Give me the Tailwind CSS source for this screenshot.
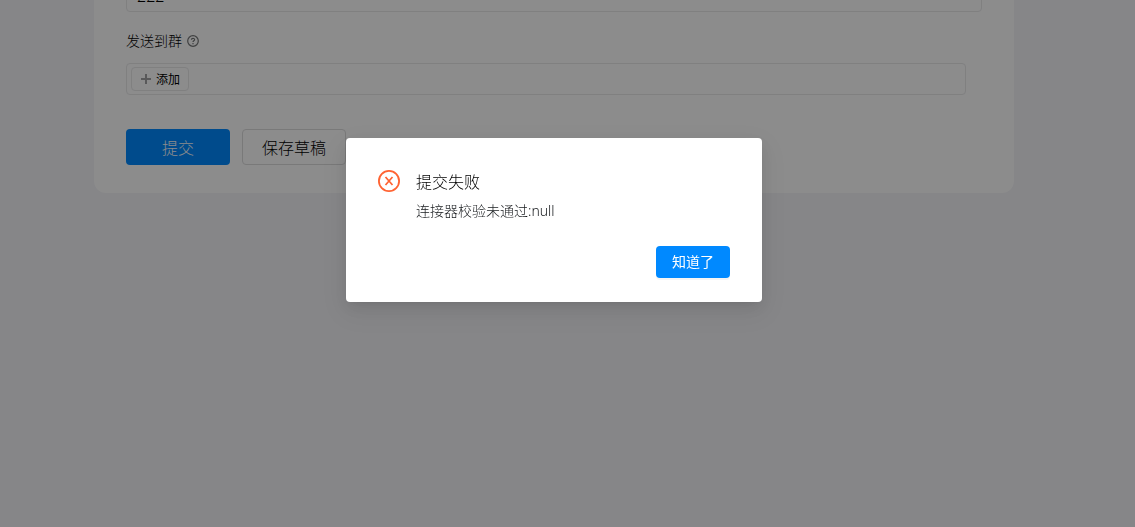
<!DOCTYPE html>
<html lang="zh-CN">
<head>
<meta charset="utf-8">
<meta name="viewport" content="width=device-width, initial-scale=1">
<title>提交失败</title>
<script src="https://cdn.jsdelivr.net/npm/@tailwindcss/browser@4"></script>
</head>
<body class="min-h-screen overflow-hidden bg-[#f4f4f8] font-['Noto_Sans','Noto_Sans_CJK_SC',sans-serif] text-sm font-light text-black">
<main class="pr-[27px]">
  <form class="mx-auto -mt-5 max-w-[920px] rounded-b-xl bg-white px-8 pb-7">
    <input aria-label="内容" value="222" class="block h-8 w-full rounded border border-[#e9e9ea] px-[10px] text-base font-light">
    <div class="mt-[18px] flex h-[22px] items-center gap-[5px]">
      <span>发送到群</span>
      <svg class="size-3" viewBox="0 0 12 12" fill="none" stroke="#747677" stroke-width="1.2" role="img" aria-label="帮助"><circle cx="6" cy="6" r="5.3"/><path d="M4.4 4.8c0-2 3.2-2 3.2-.1 0 1.2-1.6 1.1-1.6 2.4M6 8v1.2"/></svg>
    </div>
    <div class="mt-[11px] mr-4 flex h-8 items-center rounded border border-[#e9e9ea] px-1">
      <button type="button" class="flex h-6 items-center gap-1 rounded border border-[#e9e9ea] px-2 text-xs font-normal">
        <svg class="size-3" viewBox="0 0 12 12" fill="none" stroke="#a2a3a5" stroke-width="2"><path d="M6 1v10M1 6h10"/></svg>
        <span class="pt-0.5">添加</span>
      </button>
    </div>
    <div class="mt-[34px] flex gap-3 text-base">
      <button type="submit" class="h-9 w-26 rounded bg-[#0089ff] pt-0.5 text-white">提交</button>
      <button type="button" class="h-9 w-26 rounded border border-[#dcdcdd] bg-white pt-0.5">保存草稿</button>
    </div>
  </form>
</main>
<div class="fixed inset-0 flex items-start justify-center bg-black/45 pt-[138px] pr-[27px]">
  <section role="alertdialog" aria-modal="true" aria-labelledby="dialog-title" aria-describedby="dialog-text" class="w-[416px] rounded bg-white px-8 pt-8 pb-6 shadow-[0_3px_6px_-4px_rgba(0,0,0,0.12),0_6px_16px_0_rgba(0,0,0,0.08),0_9px_28px_8px_rgba(0,0,0,0.05)]">
    <div class="flex gap-4">
      <svg class="size-[22px] shrink-0" viewBox="0 0 22 22" fill="none" stroke="#ff6332"><circle cx="11" cy="11" r="10.1" stroke-width="1.8"/><path d="M7.5 7 14.5 15M14.5 7 7.5 15" stroke-width="1.7"/></svg>
      <div>
        <h2 id="dialog-title" class="text-base leading-6 font-light">提交失败</h2>
        <p id="dialog-text" class="mt-1.5 leading-[22px] text-[#171a1d]">连接器校验未通过:null</p>
      </div>
    </div>
    <div class="mt-6 flex justify-end">
      <button type="button" class="h-8 rounded bg-[#0089ff] px-4 font-normal text-white shadow-[0_2px_0_rgba(0,0,0,0.04)]">知道了</button>
    </div>
  </section>
</div>
</body>
</html>
